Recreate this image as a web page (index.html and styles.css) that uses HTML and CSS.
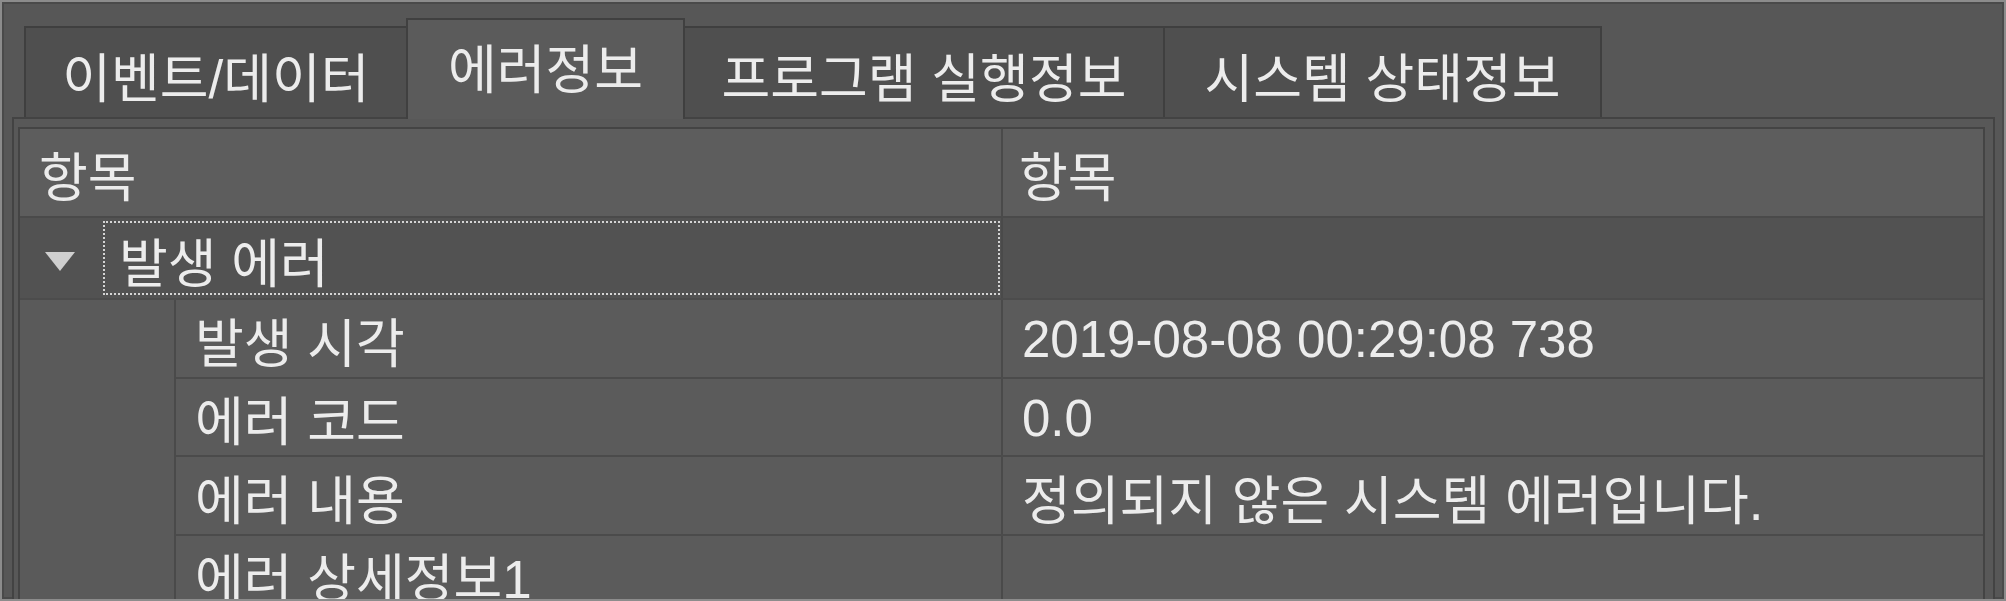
FILE: index.html
```html
<!DOCTYPE html>
<html lang="ko">
<head>
	<meta charset="UTF-8">
	<title>에러정보</title>
	<link rel="stylesheet" href="styles.css">
</head>
<body>
	<div class="window">
		<div class="tabs">
			<div class="tab">이벤트/데이터</div>
			<div class="tab active">에러정보</div>
			<div class="tab">프로그램 실행정보</div>
			<div class="tab">시스템 상태정보</div>
		</div>
		<div class="panel">
			<div class="tree">
				<div class="head">
					<div class="cell c1">항목</div>
					<div class="cell c2">항목</div>
				</div>
				<div class="group">
					<div class="cell c1">
						<span class="arrow"></span>
						<span class="focus">발생 에러</span>
					</div>
					<div class="cell c2"></div>
				</div>
				<div class="children">
					<div class="indent"></div>
					<div class="rows">
						<div class="row">
							<div class="cell c1">발생 시각</div>
							<div class="cell c2 num">2019-08-08 00:29:08 738</div>
						</div>
						<div class="row">
							<div class="cell c1">에러 코드</div>
							<div class="cell c2 num">0.0</div>
						</div>
						<div class="row">
							<div class="cell c1">에러 내용</div>
							<div class="cell c2">정의되지 않은 시스템 에러입니다.</div>
						</div>
						<div class="row">
							<div class="cell c1">에러 상세정보1</div>
							<div class="cell c2"></div>
						</div>
					</div>
				</div>
			</div>
		</div>
	</div>
</body>
</html>
```

FILE: styles.css
```css
*{padding: 0;margin: 0;}
*,*:after,*:before{box-sizing:border-box;}
html,body{height: 100%;width: 100%;overflow: hidden;background: #575757;}
body{
	font-family: "Liberation Sans", "Noto Sans CJK KR", sans-serif;
	font-size: 53px;
	color: #ececec;
}
.window{
	width: 2006px;
	height: 601px;
	border: 2px solid #8c8c8c;
	box-shadow: inset 0 0 0 2px #4a4a4a;
	background: #575757;
	padding-top: 16px;
	overflow: hidden;
	display: flex;
	flex-direction: column;
}

/* tabs */
.tabs{
	display: flex;
	align-items: flex-start;
	margin-left: 22px;
	position: relative;
	z-index: 1;
}
.tab{
	height: 91px;
	margin-top: 8px;
	padding: 4px 0 0;
	background: #4f4f4f;
	border: 2px solid #3f3f3f;
	border-bottom: none;
	display: flex;
	align-items: center;
	justify-content: center;
	white-space: nowrap;
	margin-left: -2px;
}
.tab:first-child{margin-left: 0;}
.tab.active{
	height: 101px;
	margin-top: 0;
	padding: 0 0 8px;
	background: #5b5b5b;
	border-color: #404040;
	width: 279px;
}
.tab:nth-child(1){width: 384px;}
.tab:nth-child(3){width: 482px;}
.tab:nth-child(4){width: 439px;}

/* panel */
.panel{
	flex: 1;
	margin: -2px 9px 0 10px;
	border: 2px solid #434343;
	border-bottom: none;
	background: #585858;
	padding: 8px 8px 0 4px;
}
.tree{
	border: 2px solid #444;
	border-bottom: none;
	height: 100%;
	background: #5a5a5a;
}
.cell{
	display: flex;
	align-items: center;
	white-space: nowrap;
	padding-top: 3px;
}
.num{font-size: 51px;}
.c1{
	width: 983px;
	border-right: 2px solid #4a4a4a;
	padding-left: 19px;
}
.c2{
	flex: 1;
	padding-left: 16px;
}
.head{
	display: flex;
	height: 89px;
	background: #5d5d5d;
	border-bottom: 2px solid #4a4a4a;
}
.group{
	display: flex;
	height: 82px;
	background: #525252;
	border-bottom: 2px solid #4c4c4c;
}
.group .c1{padding-left: 25px;padding-top: 0;}
.arrow{
	width: 0;
	height: 0;
	border-left: 15px solid transparent;
	border-right: 15px solid transparent;
	border-top: 19px solid #cfcfcf;
	margin-right: 28px;
	margin-top: 6px;
}
.focus{
	flex: 1;
	height: 74px;
	margin-right: 1px;
	border: 2px dotted #d4d4d4;
	padding: 3px 0 0 14px;
	display: flex;
	align-items: center;
}
.children{
	display: flex;
}
.indent{
	width: 156px;
	border-right: 2px solid #4a4a4a;
	background: #5a5a5a;
}
.rows{flex: 1;}
.row{
	display: flex;
	height: 78.5px;
	background: #5b5b5b;
	border-bottom: 2px solid #4b4b4b;
}
.row .c1{width: 827px;}
.row .c2{padding-left: 19px;}
```
